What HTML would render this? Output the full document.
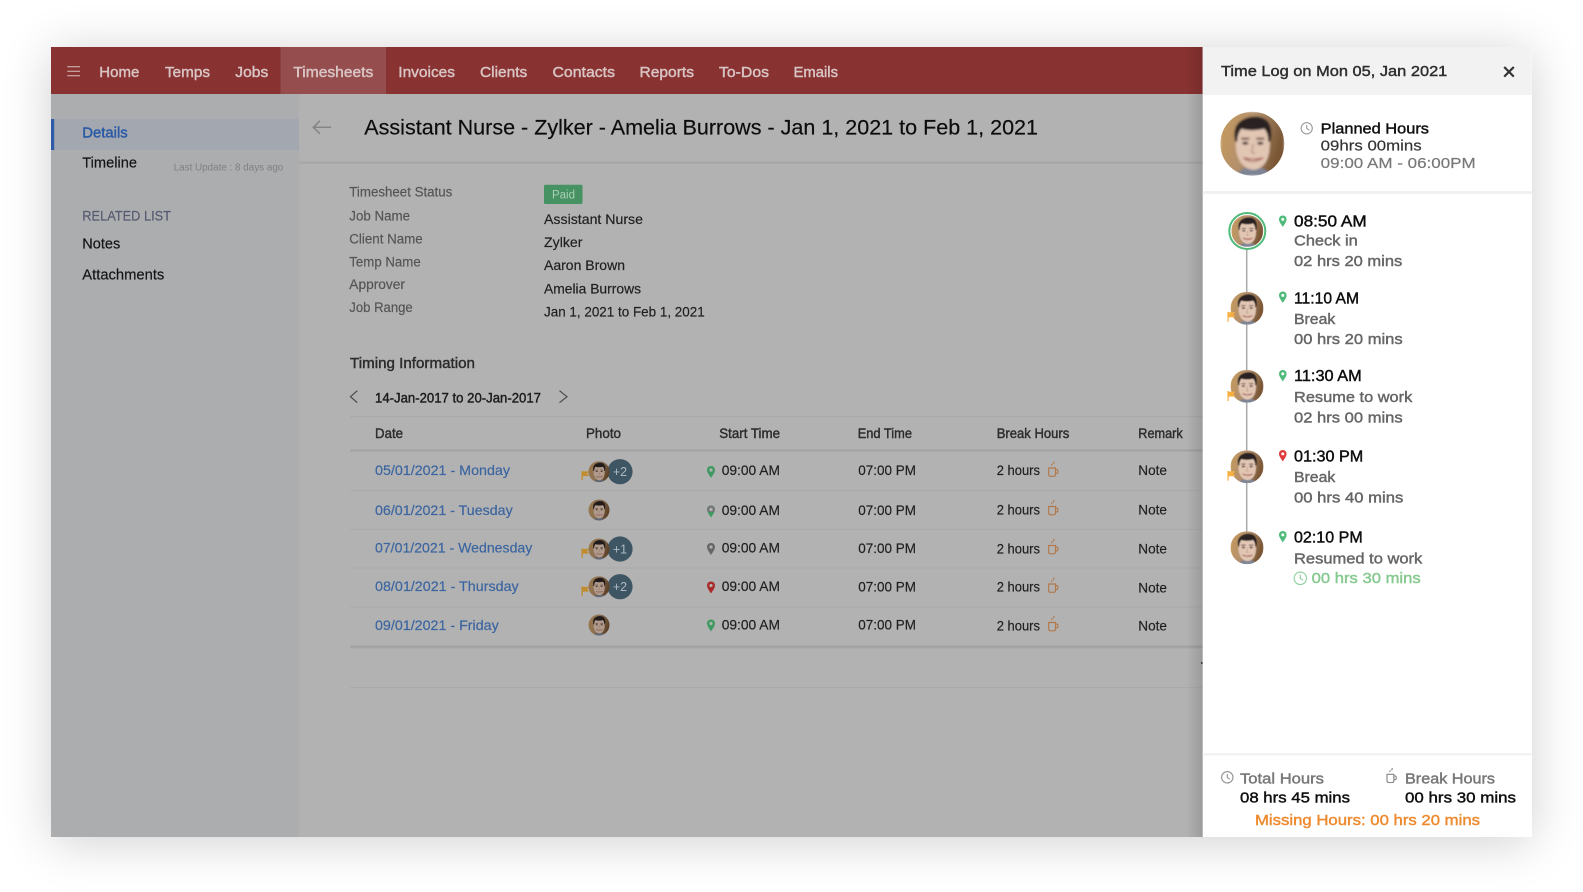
<!DOCTYPE html>
<html><head><meta charset="utf-8"><title>Time Log</title>
<style>
html,body{margin:0;padding:0;background:#fff;width:1583px;height:892px;overflow:hidden}
#win{position:absolute;left:51px;top:47px;width:1480.7px;height:790px;box-shadow:0 5px 46px rgba(0,0,0,.19)}
svg{position:absolute;left:0;top:0}
text{font-family:"Liberation Sans",sans-serif;font-size:14.5px}
.m{stroke-width:.42px}
.l{stroke-width:.18px}
</style></head><body>
<div id="win"></div>
<svg width="1583" height="892" viewBox="0 0 1583 892" xmlns="http://www.w3.org/2000/svg">
<defs>
<linearGradient id="bgp" x1="0" y1="0" x2="1" y2="0.3"><stop offset="0" stop-color="#c79a5c"/><stop offset=".5" stop-color="#b3906c"/><stop offset="1" stop-color="#7a5736"/></linearGradient>
<linearGradient id="sh" x1="0" x2="1"><stop offset="0" stop-color="#000" stop-opacity="0"/><stop offset="1" stop-color="#000" stop-opacity=".13"/></linearGradient>
<filter id="fb" x="-5%" y="-5%" width="110%" height="110%"><feGaussianBlur stdDeviation="1.1"/></filter>
<symbol id="face" viewBox="0 0 64 64">
<clipPath id="cc"><circle cx="32" cy="32" r="32"/></clipPath>
<g clip-path="url(#cc)"><g filter="url(#fb)">
<rect width="64" height="64" fill="url(#bgp)"/>
<path d="M16 64 Q20 57 27 56 L39 56 Q47 57 50 64Z" fill="#7d8494"/>
<path d="M15 26 Q15 10 32 9 Q50 10 50 26 L49 40 Q46 57 33 58 Q20 57 16 40Z" fill="#e2c6b4"/>
<path d="M15 30 Q10 9 31 5 Q52 3 51 24 L50 30 L48 30 Q48 21 44 17 Q31 20 21 17 Q17 22 17 30Z" fill="#2c2421"/>
<path d="M21 27 h8 M36 27 h8" stroke="#5e4437" stroke-width="1.8"/>
<ellipse cx="25" cy="31.5" rx="3.2" ry="1.6" fill="#53403a"/><ellipse cx="40" cy="31.5" rx="3.2" ry="1.6" fill="#53403a"/>
<path d="M33 32 L31.5 41 L35 41.5" fill="none" stroke="#c09c88" stroke-width="1.5"/>
<path d="M23 46 Q32 53 43 46 Q33 49 23 46Z" fill="#fff" stroke="#a8675a" stroke-width="1.3"/>
</g></g>
</symbol>
<symbol id="cup" viewBox="0 0 11 16">
<path d="M1 7 H7.8 V13.5 Q7.8 15.3 6 15.3 H2.8 Q1 15.3 1 13.5Z M7.8 8.6 H9 Q10.2 8.6 10.2 10 V11 Q10.2 12.4 9 12.4 H7.8 M4 4.8 V3 M5.6 3 L6.4 .6" fill="none" stroke="currentColor" stroke-width="1.15"/>
</symbol>
<symbol id="pin" viewBox="0 0 8 12">
<path fill-rule="evenodd" d="M4 0 C1.7 0 0 1.7 0 4 C0 6.6 2.6 9.6 4 12 C5.4 9.6 8 6.6 8 4 C8 1.7 6.3 0 4 0Z M4 2.4 A1.6 1.6 0 1 1 4 5.6 A1.6 1.6 0 1 1 4 2.4Z" fill="currentColor"/>
</symbol>
<symbol id="flag" viewBox="0 0 8 10">
<path d="M0 0 H1.4 V10 H0Z M1.4 .6 H8 L6 3 L8 5.6 H1.4Z" fill="currentColor"/>
</symbol>
</defs>

<g style="filter:blur(.38px)">
<rect x="51" y="47" width="1152" height="790" fill="#b2b2b2"/>
<rect x="51" y="94" width="248" height="743" fill="#acadaf"/>
<rect x="51" y="47" width="1152" height="47" fill="#883231"/>
<rect x="280.5" y="47" width="105.5" height="47" fill="#954e4d"/>
<path d="M67.3 66.7H80M67.3 71.3H80M67.3 75.8H80" stroke="#d8c0c0" stroke-width="1"/>
<g fill="#d9c4c4" stroke="#d9c4c4" class="m">
<text x="99.3" y="77" textLength="40" lengthAdjust="spacingAndGlyphs">Home</text>
<text x="165" y="77" textLength="45" lengthAdjust="spacingAndGlyphs">Temps</text>
<text x="235.3" y="77" textLength="33" lengthAdjust="spacingAndGlyphs">Jobs</text>
<text x="293.3" y="77" textLength="80" lengthAdjust="spacingAndGlyphs">Timesheets</text>
<text x="398.3" y="77" textLength="56.7" lengthAdjust="spacingAndGlyphs">Invoices</text>
<text x="480" y="77" textLength="47.3" lengthAdjust="spacingAndGlyphs">Clients</text>
<text x="552.5" y="77" textLength="62.5" lengthAdjust="spacingAndGlyphs">Contacts</text>
<text x="639.5" y="77" textLength="54.5" lengthAdjust="spacingAndGlyphs">Reports</text>
<text x="719" y="77" textLength="50" lengthAdjust="spacingAndGlyphs">To-Dos</text>
<text x="793.5" y="77" textLength="44.5" lengthAdjust="spacingAndGlyphs">Emails</text>
</g>

<rect x="51" y="119" width="248" height="31" fill="#a3a7b0"/>
<rect x="51" y="119" width="3.2" height="31" fill="#2f5aa8"/>
<text x="82.3" y="137.7" textLength="45.4" lengthAdjust="spacingAndGlyphs" fill="#2a5aa6" stroke="#2a5aa6" class="m">Details</text>
<g fill="#141416" stroke="#141416" class="l">
<text x="82.3" y="167.7" textLength="54.7" lengthAdjust="spacingAndGlyphs">Timeline</text>
<text x="82.3" y="248.3" textLength="38" lengthAdjust="spacingAndGlyphs">Notes</text>
<text x="82.3" y="279.3" textLength="82" lengthAdjust="spacingAndGlyphs">Attachments</text>
</g>
<text x="173.7" y="170.7" textLength="109.6" lengthAdjust="spacingAndGlyphs" fill="#7f8084" style="font-size:10px">Last Update : 8 days ago</text>
<text x="82.3" y="220.7" textLength="88.7" lengthAdjust="spacingAndGlyphs" fill="#555a70" stroke="#555a70" class="l" style="font-size:14px">RELATED LIST</text>

<path d="M331 127.3H313.5M320 120.8L313.3 127.3L320 133.8" fill="none" stroke="#858585" stroke-width="1.5"/>
<text x="364.3" y="134.3" textLength="673.7" lengthAdjust="spacingAndGlyphs" fill="#0c0c0c" stroke="#0c0c0c" class="l" style="font-size:21.5px">Assistant Nurse - Zylker - Amelia Burrows - Jan 1, 2021 to Feb 1, 2021</text>
<rect x="299" y="161.5" width="904" height="2.4" fill="#a7a7a7"/>

<g fill="#555" stroke="#555" class="l">
<text x="349.3" y="196.7" textLength="103" lengthAdjust="spacingAndGlyphs" style="font-size:13.5px">Timesheet Status</text>
<text x="349.3" y="220.3" textLength="60.7" lengthAdjust="spacingAndGlyphs" style="font-size:13.5px">Job Name</text>
<text x="349.3" y="243.3" textLength="73.4" lengthAdjust="spacingAndGlyphs" style="font-size:13.5px">Client Name</text>
<text x="349.3" y="266.3" textLength="71.4" lengthAdjust="spacingAndGlyphs" style="font-size:13.5px">Temp Name</text>
<text x="349.3" y="289" textLength="55.7" lengthAdjust="spacingAndGlyphs" style="font-size:13.5px">Approver</text>
<text x="349.3" y="312" textLength="63.4" lengthAdjust="spacingAndGlyphs" style="font-size:13.5px">Job Range</text>
</g>
<rect x="544" y="184.8" width="38.5" height="19.2" rx="1.5" fill="#479263"/>
<text x="552" y="198.5" textLength="23" lengthAdjust="spacingAndGlyphs" fill="#a9cfb6" style="font-size:11.5px">Paid</text>
<g fill="#1f1f1f" stroke="#1f1f1f" class="l">
<text x="544" y="224" textLength="99" lengthAdjust="spacingAndGlyphs" style="font-size:14px">Assistant Nurse</text>
<text x="544" y="247" textLength="38.5" lengthAdjust="spacingAndGlyphs" style="font-size:14px">Zylker</text>
<text x="544" y="270" textLength="81" lengthAdjust="spacingAndGlyphs" style="font-size:14px">Aaron Brown</text>
<text x="544" y="293.4" textLength="97" lengthAdjust="spacingAndGlyphs" style="font-size:14px">Amelia Burrows</text>
<text x="544" y="316.7" textLength="160.7" lengthAdjust="spacingAndGlyphs" style="font-size:14px">Jan 1, 2021 to Feb 1, 2021</text>
</g>

<text x="350" y="368" textLength="125" lengthAdjust="spacingAndGlyphs" fill="#2c2c2c" stroke="#2c2c2c" class="m">Timing Information</text>
<path d="M357.3 390.7L350.5 396.7L357.3 402.7" fill="none" stroke="#4a4a4a" stroke-width="1.2"/>
<path d="M559.5 390.7L567 396.7L559.5 402.7" fill="none" stroke="#4a4a4a" stroke-width="1.2"/>
<text x="375" y="402.7" textLength="166" lengthAdjust="spacingAndGlyphs" fill="#1c1c1c" stroke="#1c1c1c" class="m" style="font-size:14px">14-Jan-2017 to 20-Jan-2017</text>
<rect x="350" y="416" width="853" height="1.2" fill="#a9a9a9"/>
<g fill="#2c2c2c" stroke="#2c2c2c" class="m" style="font-size:14px">
<text x="375" y="438" textLength="28" lengthAdjust="spacingAndGlyphs" style="font-size:14px">Date</text>
<text x="586" y="438" textLength="35" lengthAdjust="spacingAndGlyphs" style="font-size:14px">Photo</text>
<text x="719.3" y="438" textLength="60.7" lengthAdjust="spacingAndGlyphs" style="font-size:14px">Start Time</text>
<text x="857.7" y="438" textLength="54.3" lengthAdjust="spacingAndGlyphs" style="font-size:14px">End Time</text>
<text x="996.7" y="438" textLength="72.6" lengthAdjust="spacingAndGlyphs" style="font-size:14px">Break Hours</text>
<text x="1138.3" y="438" textLength="44.4" lengthAdjust="spacingAndGlyphs" style="font-size:14px">Remark</text>
</g>
<rect x="350" y="449.3" width="853" height="2.4" fill="#a3a3a3"/>
<g fill="#aaa"><rect x="350" y="490" width="853" height="1"/><rect x="350" y="529" width="853" height="1"/><rect x="350" y="567.5" width="853" height="1"/><rect x="350" y="606.5" width="853" height="1"/><rect x="350" y="687" width="853" height="1"/></g>
<rect x="350" y="645.5" width="853" height="2.8" fill="#a3a3a3"/>
<rect x="1201" y="662" width="1.6" height="2" fill="#444"/>

<g fill="#3b65a0" stroke="#3b65a0" class="l">
<text x="375" y="475" textLength="135" lengthAdjust="spacingAndGlyphs" style="font-size:14px">05/01/2021 - Monday</text>
<text x="375" y="515" textLength="137.7" lengthAdjust="spacingAndGlyphs" style="font-size:14px">06/01/2021 - Tuesday</text>
<text x="375" y="552.3" textLength="157.3" lengthAdjust="spacingAndGlyphs" style="font-size:14px">07/01/2021 - Wednesday</text>
<text x="375" y="591" textLength="143.7" lengthAdjust="spacingAndGlyphs" style="font-size:14px">08/01/2021 - Thursday</text>
<text x="375" y="630" textLength="123.7" lengthAdjust="spacingAndGlyphs" style="font-size:14px">09/01/2021 - Friday</text>
</g>

<g>
<circle cx="620" cy="471.7" r="12.6" fill="#3e5564"/>
<circle cx="620" cy="549" r="12.6" fill="#3e5564"/>
<circle cx="620" cy="586.7" r="12.6" fill="#3e5564"/>
<g fill="#aebbc4" text-anchor="middle">
<text x="620" y="476" style="font-size:12.5px">+2</text>
<text x="620" y="553.3" style="font-size:12.5px">+1</text>
<text x="620" y="591" style="font-size:12.5px">+2</text>
</g>
<g style="filter:brightness(.78)">
<use href="#face" x="588.5" y="461.2" width="21" height="21"/>
<use href="#face" x="588.5" y="499.5" width="21" height="21"/>
<use href="#face" x="588.5" y="538.5" width="21" height="21"/>
<use href="#face" x="588.5" y="576.2" width="21" height="21"/>
<use href="#face" x="588.5" y="614.5" width="21" height="21"/>
</g>
<g color="#c08c2e">
<use href="#flag" x="581.5" y="470.5" width="7.5" height="10"/>
<use href="#flag" x="581.5" y="548" width="7.5" height="10"/>
<use href="#flag" x="581.5" y="586" width="7.5" height="10"/>
</g>
<use href="#pin" x="707" y="466" width="8" height="12" color="#3f9a62"/>
<use href="#pin" x="707" y="505.5" width="8" height="12" color="#3f9a62"/>
<path d="M707 509.5 C707 507.2 708.7 505.5 711 505.5 C713.3 505.5 715 507.2 715 509.5 L714 512 H708Z" fill="#777"/>
<circle cx="711" cy="509.5" r="1.6" fill="#b2b2b2"/>
<use href="#pin" x="707" y="543" width="8" height="12" color="#666"/>
<use href="#pin" x="707" y="581.5" width="8" height="12" color="#aa2a2a"/>
<use href="#pin" x="707" y="619.5" width="8" height="12" color="#3f9a62"/>
</g>

<g fill="#1f1f1f" stroke="#1f1f1f" class="l">
<text x="721.7" y="475" textLength="58.3" lengthAdjust="spacingAndGlyphs" style="font-size:14px">09:00 AM</text>
<text x="721.7" y="515" textLength="58.3" lengthAdjust="spacingAndGlyphs" style="font-size:14px">09:00 AM</text>
<text x="721.7" y="552.7" textLength="58.3" lengthAdjust="spacingAndGlyphs" style="font-size:14px">09:00 AM</text>
<text x="721.7" y="591" textLength="58.3" lengthAdjust="spacingAndGlyphs" style="font-size:14px">09:00 AM</text>
<text x="721.7" y="629.3" textLength="58.3" lengthAdjust="spacingAndGlyphs" style="font-size:14px">09:00 AM</text>
<text x="858.3" y="475" textLength="57.7" lengthAdjust="spacingAndGlyphs" style="font-size:14px">07:00 PM</text>
<text x="858.3" y="515" textLength="57.7" lengthAdjust="spacingAndGlyphs" style="font-size:14px">07:00 PM</text>
<text x="858.3" y="553" textLength="57.7" lengthAdjust="spacingAndGlyphs" style="font-size:14px">07:00 PM</text>
<text x="858.3" y="591.3" textLength="57.7" lengthAdjust="spacingAndGlyphs" style="font-size:14px">07:00 PM</text>
<text x="858.3" y="629.3" textLength="57.7" lengthAdjust="spacingAndGlyphs" style="font-size:14px">07:00 PM</text>
<text x="996.7" y="475" textLength="43.3" lengthAdjust="spacingAndGlyphs" style="font-size:14px">2 hours</text>
<text x="996.7" y="514.3" textLength="43.3" lengthAdjust="spacingAndGlyphs" style="font-size:14px">2 hours</text>
<text x="996.7" y="553.3" textLength="43.3" lengthAdjust="spacingAndGlyphs" style="font-size:14px">2 hours</text>
<text x="996.7" y="591.3" textLength="43.3" lengthAdjust="spacingAndGlyphs" style="font-size:14px">2 hours</text>
<text x="996.7" y="630.3" textLength="43.3" lengthAdjust="spacingAndGlyphs" style="font-size:14px">2 hours</text>
<text x="1138.3" y="475" textLength="28.7" lengthAdjust="spacingAndGlyphs" style="font-size:14px">Note</text>
<text x="1138.3" y="514.3" textLength="28.7" lengthAdjust="spacingAndGlyphs" style="font-size:14px">Note</text>
<text x="1138.3" y="553.3" textLength="28.7" lengthAdjust="spacingAndGlyphs" style="font-size:14px">Note</text>
<text x="1138.3" y="592.3" textLength="28.7" lengthAdjust="spacingAndGlyphs" style="font-size:14px">Note</text>
<text x="1138.3" y="630.3" textLength="28.7" lengthAdjust="spacingAndGlyphs" style="font-size:14px">Note</text>
</g>
<g color="#b3784a">
<use href="#cup" x="1047.7" y="461" width="11" height="16"/>
<use href="#cup" x="1047.7" y="499.5" width="11" height="16"/>
<use href="#cup" x="1047.7" y="538.5" width="11" height="16"/>
<use href="#cup" x="1047.7" y="577" width="11" height="16"/>
<use href="#cup" x="1047.7" y="615.5" width="11" height="16"/>
</g>
<rect x="1186" y="47" width="17" height="790" fill="url(#sh)"/>
</g>

<g style="filter:blur(.3px)">
<rect x="1202.7" y="47" width="329" height="790" fill="#fff"/>
<rect x="1202.7" y="47" width="329" height="48" fill="#f2f2f2"/>
<text x="1221" y="76" textLength="226.3" lengthAdjust="spacingAndGlyphs" fill="#2e2e2e" stroke="#2e2e2e" class="m" style="font-size:15px">Time Log on Mon 05, Jan 2021</text>
<path d="M1504.2 67L1513.8 76.6M1513.8 67L1504.2 76.6" stroke="#333" stroke-width="2.2"/>
<use href="#face" x="1220.3" y="111.7" width="64" height="64"/>
<circle cx="1306.7" cy="128.3" r="5.6" fill="none" stroke="#999" stroke-width="1.1"/>
<path d="M1306.7 125v3.5l2.6 1.6" fill="none" stroke="#999" stroke-width="1.1"/>
<text x="1320.7" y="133.3" textLength="108.3" lengthAdjust="spacingAndGlyphs" fill="#111" stroke="#111" class="m" style="font-size:15px">Planned Hours</text>
<text x="1320.7" y="150.7" textLength="101" lengthAdjust="spacingAndGlyphs" fill="#333" stroke="#333" class="l" style="font-size:15px">09hrs 00mins</text>
<text x="1320.7" y="168" textLength="155" lengthAdjust="spacingAndGlyphs" fill="#777" stroke="#777" class="l" style="font-size:15px">09:00 AM - 06:00PM</text>
<rect x="1202.7" y="191" width="329" height="3" fill="#f1f1f1"/>

<path d="M1246.7 240V540" stroke="#aaa" stroke-width="1.5"/>
<circle cx="1247.3" cy="231" r="18" fill="#fff" stroke="#4fbb7a" stroke-width="2"/>
<use href="#face" x="1231.3" y="215" width="32" height="32"/>
<use href="#face" x="1230.5" y="291.8" width="33" height="33"/>
<use href="#face" x="1230.5" y="369.8" width="33" height="33"/>
<use href="#face" x="1230.5" y="450.2" width="33" height="33"/>
<use href="#face" x="1230.5" y="531.2" width="33" height="33"/>
<g color="#f5b041">
<use href="#flag" x="1227.3" y="311.7" width="8" height="10"/>
<use href="#flag" x="1227.3" y="391" width="8" height="10"/>
<use href="#flag" x="1227.3" y="470.7" width="8" height="10"/>
</g>
<g color="#4fbb7a">
<use href="#pin" x="1279" y="215.5" width="7.6" height="11.5"/>
<use href="#pin" x="1279" y="291.5" width="7.6" height="11.5"/>
<use href="#pin" x="1279" y="370" width="7.6" height="11.5"/>
<use href="#pin" x="1279" y="531" width="7.6" height="11.5"/>
</g>
<use href="#pin" x="1279" y="450" width="7.6" height="11.5" color="#e03c3c"/>

<g fill="#0e0e0e" stroke="#0e0e0e" class="m">
<text x="1294" y="226.7" textLength="72.7" lengthAdjust="spacingAndGlyphs" style="font-size:15.5px">08:50 AM</text>
<text x="1294" y="303.3" textLength="65" lengthAdjust="spacingAndGlyphs" style="font-size:15.5px">11:10 AM</text>
<text x="1294" y="381" textLength="67.7" lengthAdjust="spacingAndGlyphs" style="font-size:15.5px">11:30 AM</text>
<text x="1294" y="461.3" textLength="69.3" lengthAdjust="spacingAndGlyphs" style="font-size:15.5px">01:30 PM</text>
<text x="1294" y="542.3" textLength="68.7" lengthAdjust="spacingAndGlyphs" style="font-size:15.5px">02:10 PM</text>
</g>
<g fill="#666" stroke="#666" class="m">
<text x="1294" y="245.7" textLength="63.7" lengthAdjust="spacingAndGlyphs" style="font-size:15px">Check in</text>
<text x="1294" y="266" textLength="108.3" lengthAdjust="spacingAndGlyphs" style="font-size:15px">02 hrs 20 mins</text>
<text x="1294" y="324" textLength="41.3" lengthAdjust="spacingAndGlyphs" style="font-size:15px">Break</text>
<text x="1294" y="344" textLength="108.7" lengthAdjust="spacingAndGlyphs" style="font-size:15px">00 hrs 20 mins</text>
<text x="1294" y="402" textLength="118.3" lengthAdjust="spacingAndGlyphs" style="font-size:15px">Resume to work</text>
<text x="1294" y="422.3" textLength="108.7" lengthAdjust="spacingAndGlyphs" style="font-size:15px">02 hrs 00 mins</text>
<text x="1294" y="482" textLength="41.3" lengthAdjust="spacingAndGlyphs" style="font-size:15px">Break</text>
<text x="1294" y="502.7" textLength="109.3" lengthAdjust="spacingAndGlyphs" style="font-size:15px">00 hrs 40 mins</text>
<text x="1294" y="563.3" textLength="128.3" lengthAdjust="spacingAndGlyphs" style="font-size:15px">Resumed to work</text>
</g>
<circle cx="1300.3" cy="578.3" r="6.2" fill="none" stroke="#8ccf9c" stroke-width="1.1"/>
<path d="M1300.3 574.5v4l2.8 1.7" fill="none" stroke="#8ccf9c" stroke-width="1.1"/>
<text x="1311.7" y="583" textLength="109" lengthAdjust="spacingAndGlyphs" fill="#86c98f" stroke="#86c98f" class="m" style="font-size:15px">00 hrs 30 mins</text>

<rect x="1202.7" y="753" width="329" height="2.4" fill="#f2f2f2"/>
<circle cx="1227.3" cy="777.3" r="5.7" fill="none" stroke="#999" stroke-width="1.2"/>
<path d="M1227.3 774v3.6l2.6 1.6" fill="none" stroke="#999" stroke-width="1.2"/>
<text x="1240" y="783.3" textLength="84" lengthAdjust="spacingAndGlyphs" fill="#777" stroke="#777" class="m" style="font-size:15px">Total Hours</text>
<text x="1240" y="802.7" textLength="110" lengthAdjust="spacingAndGlyphs" fill="#0e0e0e" stroke="#0e0e0e" class="m" style="font-size:15px">08 hrs 45 mins</text>
<use href="#cup" x="1385.7" y="767.3" width="11.6" height="16" color="#888"/>
<text x="1405" y="783.3" textLength="90" lengthAdjust="spacingAndGlyphs" fill="#777" stroke="#777" class="m" style="font-size:15px">Break Hours</text>
<text x="1405" y="802.7" textLength="111" lengthAdjust="spacingAndGlyphs" fill="#0e0e0e" stroke="#0e0e0e" class="m" style="font-size:15px">00 hrs 30 mins</text>
<text x="1255" y="825" textLength="225" lengthAdjust="spacingAndGlyphs" fill="#ee8a2e" stroke="#ee8a2e" class="m" style="font-size:15px">Missing Hours: 00 hrs 20 mins</text>
</g>
</svg>
</body></html>
